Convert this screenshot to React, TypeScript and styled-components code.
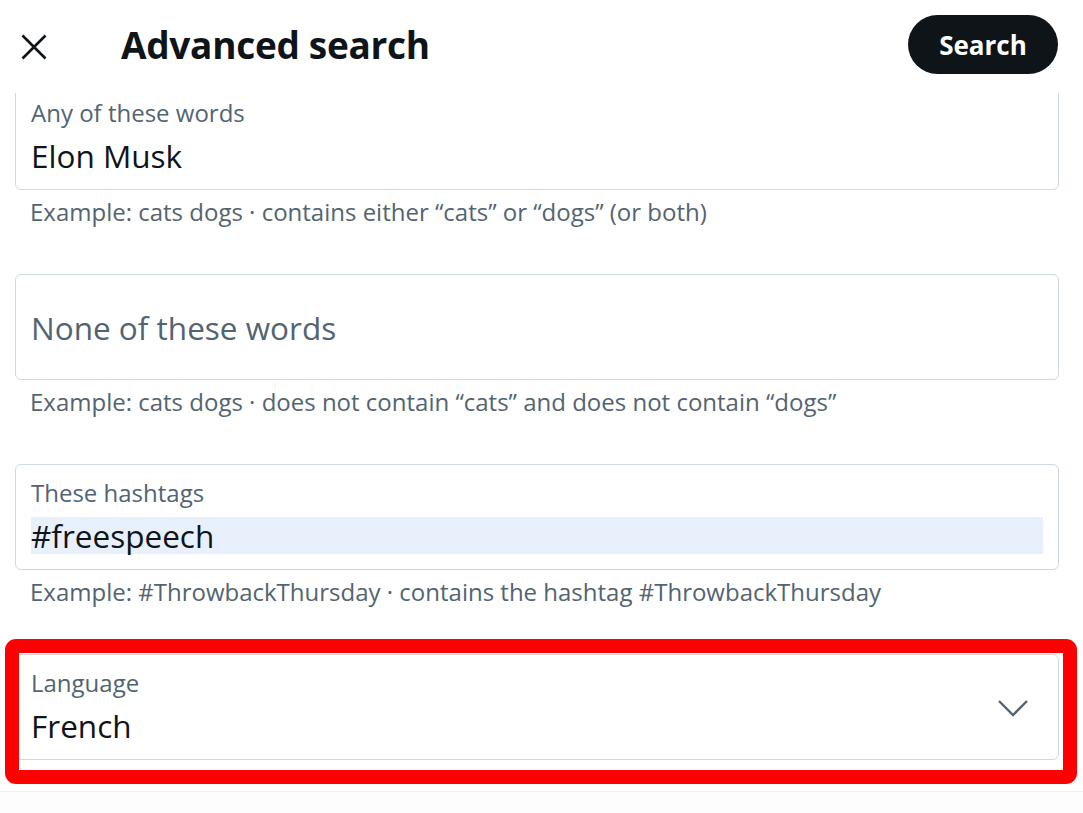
import styled, { createGlobalStyle } from "styled-components";

const GlobalStyle = createGlobalStyle`
  html, body {
    margin: 0;
    padding: 0;
    background: #ffffff;
  }
  body {
    font-family: "Open Sans", "Noto Sans", "Liberation Sans", sans-serif;
    color: #0f1419;
  }
`;

const Page = styled.div`
  width: 1083px;
  height: 813px;
  overflow: hidden;
  display: flex;
  flex-direction: column;
`;

const Header = styled.header`
  position: relative;
  z-index: 2;
  height: 93px;
  flex-shrink: 0;
  background: #ffffff;
  display: flex;
  align-items: center;
  padding: 0 25px 4px 21px;
  box-sizing: border-box;
`;

const CloseButton = styled.button`
  width: 26px;
  height: 26px;
  padding: 0;
  border: none;
  background: none;
  display: flex;
  align-items: center;
  justify-content: center;
  margin-top: 4px;
`;

const Title = styled.h1`
  margin: 0 0 0 74px;
  font-size: 37px;
  font-weight: 700;
  letter-spacing: -0.3px;
  flex: 1;
`;

const SearchButton = styled.button`
  height: 59px;
  width: 150px;
  border: none;
  border-radius: 30px;
  background: #0f1419;
  color: #ffffff;
  font-family: inherit;
  font-size: 26px;
  font-weight: 700;
`;

const Form = styled.div`
  margin-top: -9px;
  padding: 0 24px 0 15px;
  display: flex;
  flex-direction: column;
  flex: 1;
`;

const Group = styled.div`
  display: flex;
  flex-direction: column;
  margin-bottom: 47px;
`;

const Box = styled.div<{ $centered?: boolean }>`
  position: relative;
  height: 106px;
  box-sizing: border-box;
  border: 1px solid #cfd9de;
  border-radius: 6px;
  padding: ${(p) => (p.$centered ? "0 15px" : "13px 15px 0 15px")};
  display: flex;
  flex-direction: column;
  justify-content: ${(p) => (p.$centered ? "center" : "flex-start")};
`;

const Label = styled.div`
  font-size: 24px;
  line-height: 30px;
  color: #536471;
`;

const Value = styled.div<{ $selected?: boolean; $placeholder?: boolean }>`
  font-size: 31.5px;
  line-height: 37px;
  margin-top: ${(p) => (p.$placeholder ? "0" : "9px")};
  color: ${(p) => (p.$placeholder ? "#536471" : "#0f1419")};
  background: ${(p) => (p.$selected ? "#e8f0fc" : "transparent")};
`;

const Helper = styled.div`
  font-size: 24px;
  line-height: 30px;
  color: #536471;
  padding: 7px 0 0 15px;
`;

const Select = styled.div`
  position: relative;
`;

const Chevron = styled.svg`
  position: absolute;
  right: 30px;
  top: 45px;
`;

const Highlight = styled.div`
  position: absolute;
  left: -10px;
  right: -18px;
  top: -15px;
  bottom: -24px;
  border: 14px solid #ff0000;
  border-radius: 11px;
  pointer-events: none;
`;

const BottomEdge = styled.div`
  margin-top: 31px;
  border-top: 1px solid #eff1f2;
  margin-left: -15px;
  margin-right: -24px;
  flex: 1;
  background: #fdfdfd;
`;

const fields = [
  {
    label: "Any of these words",
    value: "Elon Musk",
    help: "Example: cats dogs · contains either “cats” or “dogs” (or both)",
  },
  {
    placeholder: "None of these words",
    help: "Example: cats dogs · does not contain “cats” and does not contain “dogs”",
  },
  {
    label: "These hashtags",
    value: "#freespeech",
    selected: true,
    help: "Example: #ThrowbackThursday · contains the hashtag #ThrowbackThursday",
  },
];

export default function App() {
  return (
    <Page>
      <GlobalStyle />
      <Header>
        <CloseButton aria-label="Close">
          <svg width="26" height="26" viewBox="0 0 26 26">
            <path d="M1.5 1.5 L24.5 24.5 M24.5 1.5 L1.5 24.5" stroke="#0f1419" strokeWidth="2.6" fill="none" />
          </svg>
        </CloseButton>
        <Title>Advanced search</Title>
        <SearchButton>Search</SearchButton>
      </Header>
      <Form>
        {fields.map((f, i) => (
          <Group key={i}>
            {f.placeholder ? (
              <Box $centered>
                <Value $placeholder>{f.placeholder}</Value>
              </Box>
            ) : (
              <Box>
                <Label>{f.label}</Label>
                <Value $selected={f.selected}>{f.value}</Value>
              </Box>
            )}
            <Helper>{f.help}</Helper>
          </Group>
        ))}
        <Select>
          <Box>
            <Label>Language</Label>
            <Value>French</Value>
          </Box>
          <Chevron width="32" height="18" viewBox="0 0 32 18">
            <path d="M2 2 L16 16 L30 2" stroke="#536471" strokeWidth="2.4" fill="none" />
          </Chevron>
          <Highlight />
        </Select>
        <BottomEdge />
      </Form>
    </Page>
  );
}
